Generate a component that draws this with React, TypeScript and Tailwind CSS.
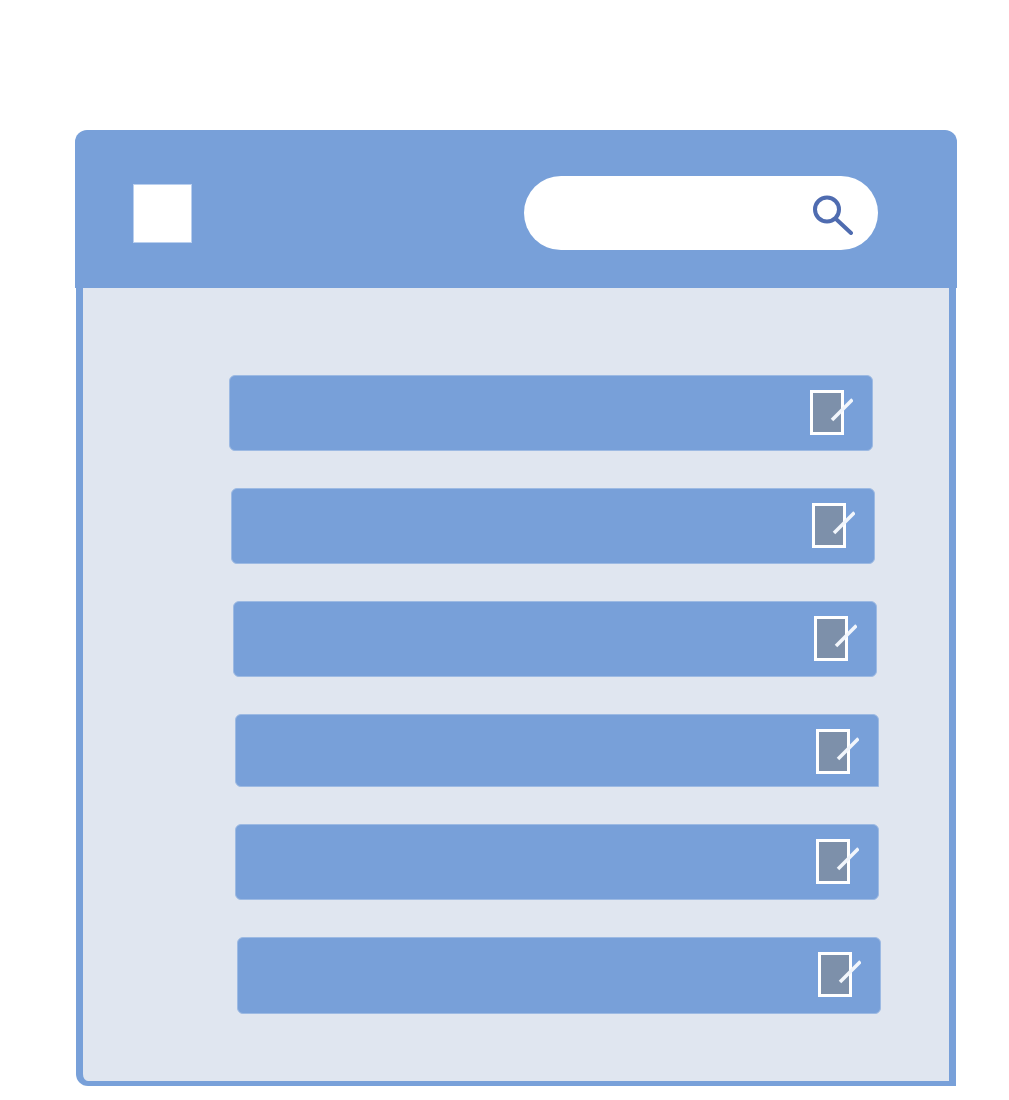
const rows = [
  { id: 1, box: 'ml-[146px] h-[76px] rounded-[6px]' },
  { id: 2, box: 'ml-[148px] h-[76px] rounded-[6px]' },
  { id: 3, box: 'ml-[150px] h-[76px] rounded-[6px]' },
  { id: 4, box: 'ml-[152px] h-[73px] rounded-[6px] rounded-br-none' },
  { id: 5, box: 'ml-[152px] h-[76px] rounded-[6px]' },
  { id: 6, box: 'ml-[154px] h-[77px] rounded-[6px]' },
]

function EditIcon() {
  return (
    <svg width="43" height="45" viewBox="0 0 43 45" className="block">
      <rect x="1.5" y="1.5" width="31" height="42" fill="#7d90aa" stroke="#ffffff" strokeWidth="3" />
      <path d="M22 30 L42.5 9.5" stroke="#f2f6fc" strokeWidth="3.5" fill="none" />
    </svg>
  )
}

function SearchIcon() {
  return (
    <svg width="41" height="40" viewBox="0 0 41 40" className="block">
      <circle cx="15" cy="14.5" r="12" fill="none" stroke="#4f6cb0" strokeWidth="4" />
      <path d="M24 24 L39 38" stroke="#4f6cb0" strokeWidth="4" strokeLinecap="round" fill="none" />
    </svg>
  )
}

export default function App() {
  return (
    <div className="min-h-[1100px] bg-white pt-[130px] pl-[75px]">
      <div className="w-[882px]">
        <div className="h-[158px] rounded-t-[12px] bg-[#78a0d9] pt-[8px] pl-[58px] pr-[79px] flex items-center justify-between">
          <div className="w-[59px] h-[59px] bg-white border border-[#b9cfee]" />
          <div className="w-[354px] h-[74px] rounded-full bg-white flex justify-end items-start pt-[19px] pr-[25px]">
            <SearchIcon />
          </div>
        </div>
        <div className="w-[880px] ml-[1px] box-border border-x-[7px] border-b-[5px] border-[#78a0d9] rounded-bl-[12px] bg-[#e0e6f0] pt-[87px] pb-[67px] flex flex-col gap-[37px]">
          {rows.map((row) => (
            <div
              key={row.id}
              className={`${row.box} w-[644px] box-border border border-[#9dbae3] bg-[#78a0d9] flex justify-end items-start pt-[14px] pr-[19px]`}
            >
              <EditIcon />
            </div>
          ))}
        </div>
      </div>
    </div>
  )
}
